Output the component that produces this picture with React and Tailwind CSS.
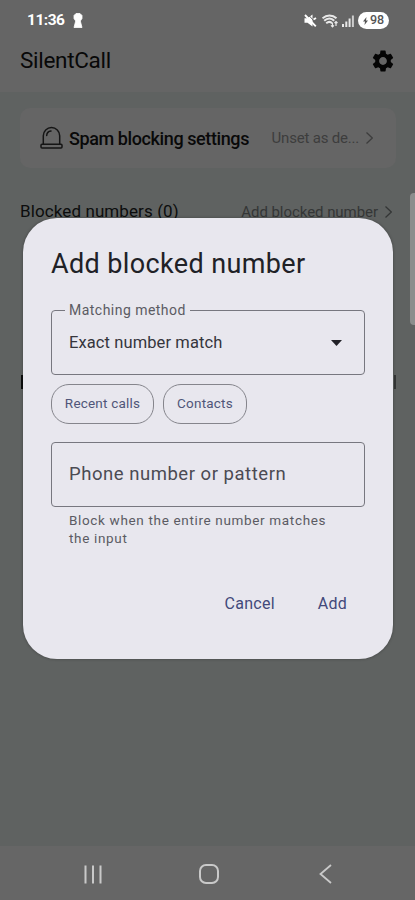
import React from "react";

function StatusBar() {
  return (
    <div className="flex h-[41px] items-center justify-between pl-[27px] pr-[26px] text-white">
      <div className="flex items-center gap-[8px]">
        <span className="w-[38px] whitespace-nowrap text-[15.5px] font-bold tracking-[-0.5px]">11:36</span>
        <svg className="h-[15px] w-[10px]" viewBox="0 0 10 15" fill="currentColor">
          <path d="M3 0.500h4L9 2.500v3L7.300 8 9 14.500H1L2.700 8 1 5.500v-3z" stroke="currentColor" strokeWidth="0.800" strokeLinejoin="round" />
        </svg>
      </div>
      <div className="flex items-center">
        <svg className="h-[13px] w-[13px]" viewBox="0 0 13 13" fill="currentColor">
          <path d="M0.500 4.300h3L8.500 0.500v12L3.500 8.800h-3z" />
          <path d="M4 0.500L12.800 10" stroke="#646464" strokeWidth="1" />
          <path d="M1 1L11.800 12.300M9.500 5.500l2.500-1.500" stroke="currentColor" strokeWidth="1.900" />
        </svg>
        <svg className="ml-[5px] h-[14px] w-4" viewBox="0 0 16 14" fill="none" stroke="currentColor" strokeWidth="2" opacity=".85">
          <path d="M0.500 4.300c4-3.800 10-3.800 14 0M2.200 6.800c3.200-3 7.200-3 10 0M4.200 9.200c2.200-1.800 4.200-1.800 6 0" />
          <path d="M10.500 9v4M9 11.300l1.500 1.500 1.500-1.500M14 12V7.500M12.500 9L14 7.500 15.500 9" strokeWidth="1.200" />
        </svg>
        <svg className="ml-[4px] h-3 w-3" viewBox="0 0 12 12" fill="currentColor" opacity=".85">
          <path d="M0 9h2v3H0zM3.300 6.500h2V12h-2zM6.600 3.500h2V12h-2z" />
          <path d="M9.900 0.500h2V12h-2z" opacity=".8" />
        </svg>
        <div className="ml-[4px] flex h-[17px] w-[31px] items-center justify-center gap-[2px] rounded-full bg-white text-[#555]">
          <svg className="h-2 w-[5px]" viewBox="0 0 5 8" fill="currentColor">
            <path d="M3.500 0L0 4.500h2L1.500 8 5 3.500H3z" />
          </svg>
          <span className="text-[12.5px] font-medium leading-none">98</span>
        </div>
      </div>
    </div>
  );
}

function Gear() {
  return (
    <svg className="h-[26px] w-[26px]" viewBox="0 0 24 24" fill="#050505">
      <path d="M19.140 12.940c.04-.3.060-.61.060-.94 0-.32-.02-.64-.07-.94l2.030-1.580a.49.49 0 0 0 .12-.61l-1.920-3.320a.488.488 0 0 0-.59-.22l-2.390.96c-.5-.38-1.030-.7-1.620-.94l-.36-2.540a.484.484 0 0 0-.48-.41h-3.840c-.24 0-.43.17-.47.41l-.36 2.540c-.59.24-1.130.57-1.620.94l-2.390-.96c-.22-.08-.47 0-.59.22L2.740 8.870c-.12.21-.08.47.12.61l2.030 1.580c-.05.3-.09.63-.09.94s.02.64.07.94l-2.030 1.580a.49.49 0 0 0-.12.61l1.920 3.320c.12.22.37.29.59.22l2.390-.96c.5.38 1.030.7 1.620.94l.36 2.540c.05.24.24.41.48.41h3.840c.24 0 .44-.17.47-.41l.36-2.540c.59-.24 1.130-.56 1.620-.94l2.390.96c.22.08.47 0 .59-.22l1.920-3.320c.12-.22.07-.47-.12-.61l-2.010-1.580zM12 15.600c-1.980 0-3.600-1.620-3.600-3.600s1.620-3.600 3.600-3.600 3.600 1.620 3.600 3.600-1.620 3.600-3.600 3.600z" />
    </svg>
  );
}

function Chevron() {
  return (
    <svg className="h-3 w-[7px] shrink-0" viewBox="0 0 7 12" fill="none" stroke="currentColor" strokeWidth="1.300">
      <path d="M0.500 0.500L6.300 6 0.500 11.500" />
    </svg>
  );
}

function SectionHeader({ title, action }) {
  return (
    <div className="flex h-6 items-center justify-between">
      <span className="whitespace-nowrap text-[17px] tracking-[0.1px] text-[#0c0d0d]">{title}</span>
      <span className="flex items-center gap-[7px] pr-1 text-[#343636]">
        <span className="whitespace-nowrap text-[15px] tracking-[-0.05px]">{action}</span>
        <Chevron />
      </span>
    </div>
  );
}

function Background() {
  return (
    <div className="flex h-full flex-col">
      <header className="h-[92px] bg-[#656565]">
        <StatusBar />
        <div className="flex h-[40px] items-center justify-between pl-5 pr-[19px]">
          <h1 className="text-[22.500px] tracking-[-0.3px] text-[#080808]">SilentCall</h1>
          <Gear />
        </div>
      </header>
      <main className="flex-1 pl-5 pr-[19px] pt-4">
        <div className="flex h-[60px] items-center rounded-[10px] bg-[#656565] pl-5 pr-[23px]">
          <svg className="h-6 w-[23px] shrink-0" viewBox="0 0 23 24" fill="none" stroke="#151515" strokeWidth="1.500" strokeLinejoin="round">
            <path d="M3.300 18V9.800a8.200 8.200 0 0 1 16.400 0V18" />
            <rect x="1" y="18.300" width="21" height="3.700" rx="1" />
            <path d="M6.700 9.500a4.800 4.800 0 0 1 4.300-4.500" strokeLinecap="round" />
          </svg>
          <span className="ml-[6px] whitespace-nowrap text-[18px] font-medium tracking-[-0.4px] text-[#090909]">Spam blocking settings</span>
          <span className="ml-auto flex items-center gap-[7px] text-[#3d3d3d]">
            <span className="whitespace-nowrap text-[15px] tracking-[-0.2px]">Unset as de...</span>
            <Chevron />
          </span>
        </div>
        <div className="mt-8">
          <SectionHeader title="Blocked numbers (0)" action="Add blocked number" />
        </div>
        {/* next section, only its outer edges show beside the dialog */}
        <div className="mt-[151px] flex h-[14px] justify-between pl-px">
          <span className="w-1 bg-[#0c0d0d]" />
          <span className="w-[2px] bg-[#343636]" />
        </div>
      </main>
      <nav className="flex h-[54px] items-center bg-[#666] pt-[2px] text-[#c9c9c9]">
        <svg className="ml-[84px] h-[19px] w-[19px]" viewBox="0 0 19 19" stroke="currentColor" strokeWidth="2">
          <path d="M1.500 0.500v18M9 0.500v18M16.500 0.500v18" />
        </svg>
        <svg className="ml-[96px] h-5 w-5" viewBox="0 0 20 20" fill="none" stroke="currentColor" strokeWidth="2">
          <rect x="1" y="1" width="18" height="18" rx="6" />
        </svg>
        <svg className="ml-[100px] h-5 w-[13px]" viewBox="0 0 13 20" fill="none" stroke="currentColor" strokeWidth="1.800">
          <path d="M12 1L1.500 10 12 19" />
        </svg>
      </nav>
    </div>
  );
}

function Dialog() {
  return (
    <div className="absolute left-[23px] top-[218px] flex h-[441px] w-[370px] flex-col rounded-[34px] bg-[#e8e7ee] px-7 shadow-[0_0_3px_rgba(0,0,0,0.35)]">
      <h2 className="mt-7 h-9 whitespace-nowrap text-[27px] leading-9 tracking-[0.37px] text-[#202126]">Add blocked number</h2>
      <fieldset className="mt-[20px] h-[73px] rounded-[4px] border border-[#77777f] pl-[13px] pr-[22px]">
        <legend className="whitespace-nowrap px-1 text-[14px] leading-4 tracking-[0.47px] text-[#5b5b63]">Matching method</legend>
        <div className="flex items-center justify-between pl-1 pt-[13px]">
          <span className="text-[16.500px] leading-6 tracking-[0.1px] text-[#35353c]">Exact number match</span>
          <svg className="h-[6px] w-[11px]" viewBox="0 0 11 6" fill="#222228">
            <path d="M0 0h11L5.500 6z" />
          </svg>
        </div>
      </fieldset>
      <div className="mt-[9px] flex gap-[9px] text-[13.5px] tracking-[0.2px] text-[#505679]">
        <button className="h-10 w-[103px] rounded-[18px] border border-[#85858c] pb-px">Recent calls</button>
        <button className="h-10 w-[84px] rounded-[18px] border border-[#85858c] pb-px">Contacts</button>
      </div>
      <div className="mt-[18px] flex h-[65px] items-center rounded-[4px] border border-[#77777f] pl-[17px] text-[18.500px] tracking-[0.53px] text-[#4b4b53]">
        Phone number or pattern
      </div>
      <p className="ml-[18px] mt-[4px] whitespace-nowrap text-[13.500px] leading-[18px] tracking-[0.66px] text-[#5b5b63]">
        Block when the entire number matches
        <br />
        the input
      </p>
      <div className="mt-[45px] flex justify-end gap-[43px] pr-[18px] text-[16px] leading-6 tracking-[0.25px] text-[#42497a]">
        <button>Cancel</button>
        <button>Add</button>
      </div>
    </div>
  );
}

export default function App() {
  return (
    <div className="relative h-[900px] w-[415px] overflow-hidden bg-[#5f6261] font-[Roboto,sans-serif]">
      <Background />
      <div className="absolute right-[-4px] top-[193px] h-[132px] w-[9px] rounded-[4px] bg-[#8c8e8d]" />
      <Dialog />
    </div>
  );
}
